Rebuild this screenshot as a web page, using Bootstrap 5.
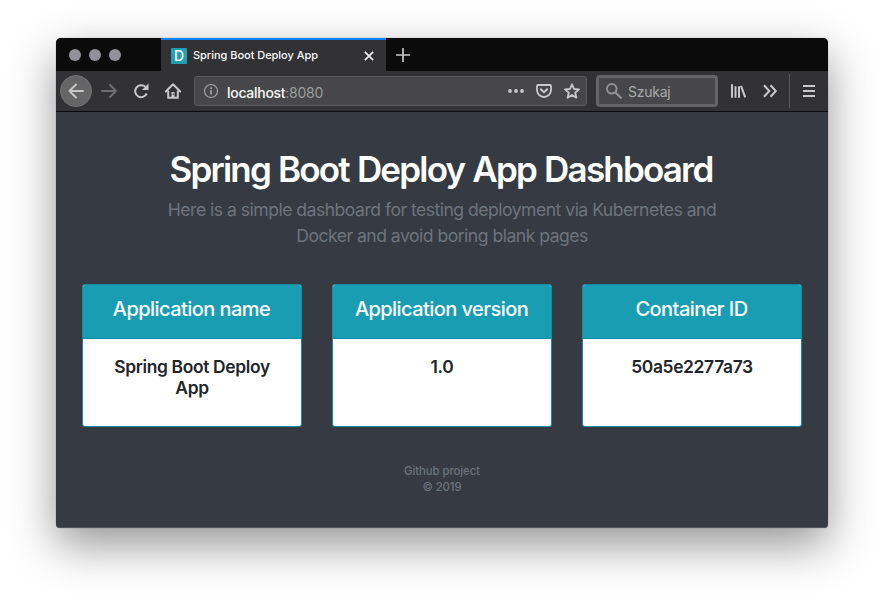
<!DOCTYPE html>
<html lang="en">
<head>
<meta charset="utf-8">
<meta name="viewport" content="width=device-width, initial-scale=1">
<title>Spring Boot Deploy App</title>
<link href="https://cdn.jsdelivr.net/npm/bootstrap@5.3.0/dist/css/bootstrap.min.css" rel="stylesheet">
<style>
body{font-family:Inter,"Liberation Sans",sans-serif;background:#fff;width:884px;height:602px;overflow:hidden;padding:38px 56px}
svg{display:block;flex:none;fill:none;stroke:#c9c9ca;stroke-width:2}
.window{width:772px;height:490px;border-radius:5px 5px 4px 4px;background:#363a43;overflow:hidden;box-shadow:0 0 1px rgba(0,0,0,.5),0 17px 46px rgba(0,0,0,.42);position:relative}
.window::after{content:"";position:absolute;inset:0;border-radius:inherit;box-shadow:inset 0 -1px 0 rgba(120,125,130,.4);pointer-events:none}
.tabs{height:33px;background:#0b0b0c}
.dots{width:105px;padding-left:13px;gap:8px}
.dots i{width:12px;height:12px;border-radius:50%;background:#919096}
.tab{width:225px;background:#323234;border-top:2px solid #0a84ff;color:#f9f9fa;font-size:11px;font-weight:500;padding:0 12px 0 10px}
.favicon{width:16px;height:16px;background:#239fb4;color:#fff;font-size:14px;line-height:16px;font-weight:500;border-radius:1px;margin-right:6px}
.tab-title{letter-spacing:-.03px}
.plus{margin-left:10px}
.toolbar{height:41px;background:#323234;border-bottom:1px solid #0b0b0c}
.back{width:32px;height:32px;border-radius:50%;background:#656566;border:1px solid #747475;margin-left:4px}
.back svg{margin:7px}
.reload{margin-left:15px}
.home{margin-left:16px}
.address{width:393px;height:30px;background:#474749;border:1px solid #5b5b5d;border-radius:3px;color:#f9f9fa;font-size:14px;font-weight:500;letter-spacing:-.28px;padding:0 6px 0 8px;margin-left:13px}
.address div{padding-top:2px}
.address span{color:#9d9d9f;font-weight:400}
.address svg+svg{margin-left:12px}
.info{stroke:#aaaaac;margin-right:8px}
.search{width:122px;height:32px;border:3px solid #656567;border-radius:4px;background:#474749;color:#aaaaac;font-size:14px;letter-spacing:-.25px;padding-left:7px;margin-left:9px}
.search svg{stroke:#929294;margin-right:6px}
.library{margin-left:12px}
.overflow-icon{margin-left:16px}
.divider{width:1px;height:34px;background:#59595b;margin-left:11px}
.menu-icon{margin-left:13px}
main{padding-top:36px}
h1.title{font-size:35px;line-height:42px;font-weight:600;color:#fff;letter-spacing:-1.8px;word-spacing:1px;padding-right:2px}
.intro{font-size:17.6px;line-height:26px;color:#6c757d;letter-spacing:-.52px;padding-top:7px}
.tiles{gap:30px;padding:0 26px;margin-top:35px}
.tile{width:220px;height:143px;border:1px solid #148da2;border-radius:3px;overflow:hidden}
.tile .card-header{height:54px;background:#199db3;border-bottom:1px solid #148da2;color:#fff;padding:12px 1px 0 0;border-radius:0}
.tile h2{font-size:20px;line-height:25px;font-weight:500;letter-spacing:-.56px}
.tile h3{font-size:17.4px;line-height:21px;font-weight:600;color:#212529;letter-spacing:-.33px}
.tile .card-body{padding:17px 20px}
footer{font-size:11.3px;line-height:16px;font-weight:500;color:#6c757d;letter-spacing:-.05px;margin-top:36px}
</style>
</head>
<body>
<div class="window">
  <div class="tabs d-flex">
    <div class="dots d-flex align-items-center"><i></i><i></i><i></i></div>
    <div class="tab d-flex align-items-center">
      <div class="favicon text-center">D</div>
      <span class="tab-title">Spring Boot Deploy App</span>
      <svg class="ms-auto" width="10" height="10" viewBox="0 0 10 10"><path d="M.8.8l8.4 8.4M9.200.8L.8 9.200" stroke="#eee" stroke-width="1.700"/></svg>
    </div>
    <svg class="plus align-self-center" width="14" height="14" viewBox="0 0 14 14"><path d="M7 0v14M0 7h14" stroke-width="1.700"/></svg>
  </div>
  <div class="toolbar d-flex align-items-center">
    <div class="back"><svg width="16" height="16" viewBox="0 0 16 16" stroke-linecap="round" stroke-linejoin="round"><path d="M15 8H1.500M8 1.500L1.500 8 8 14.500"/></svg></div>
    <svg class="ms-2" width="18" height="16" viewBox="0 0 18 16" stroke-linecap="round" stroke-linejoin="round"><path stroke="#6e6e70" d="M2 8h14M10 2l6 6-6 6"/></svg>
    <svg class="reload" width="16" height="16" viewBox="0 0 16 16"><path d="M13.700 10.500A6 6 0 1 1 12.300 3.800"/><path d="M15.500.5V7H9z" fill="#c9c9ca" stroke="none"/></svg>
    <svg class="home" width="16" height="16" viewBox="0 0 16 16"><path d="M.8 8.500L8 1.300l7.200 7.200" stroke-linecap="round" stroke-linejoin="round"/><path d="M3.200 7.500v7.300h9.600V7.500"/><path d="M6.500 9h3v6h-3z" fill="#c9c9ca" stroke="none"/><path d="M8.200 10.500v1.500" stroke="#323234" stroke-width="1"/></svg>
    <div class="address d-flex align-items-center">
      <svg class="info" width="16" height="16" viewBox="0 0 16 16"><circle cx="8" cy="8" r="6.500" stroke-width="1.100"/><path d="M8 7v4.500M8 4.300v1.600" stroke-width="1.600"/></svg>
      <div>localhost<span>:8080</span></div>
      <svg class="ms-auto" width="16" height="16" viewBox="0 0 16 16"><g fill="#c9c9ca" stroke="none"><circle cx="2" cy="8" r="1.900"/><circle cx="8" cy="8" r="1.900"/><circle cx="14" cy="8" r="1.900"/></g></svg>
      <svg width="16" height="16" viewBox="0 0 16 16"><path d="M2 2h12q1 0 1 1v4a7 7 0 0 1-14 0V3q0-1 1-1z" stroke-width="1.800"/><path d="M4.800 6.200L8 9.300l3.200-3.100" stroke-linecap="round" stroke-linejoin="round"/></svg>
      <svg width="16" height="16" viewBox="0 0 16 16"><path d="M8 1.300l2 4.700 5 .4-3.800 3.300 1.200 5L8 12l-4.400 2.700 1.200-5L1 6.400 6 6z" stroke-width="1.800" stroke-linejoin="round"/></svg>
    </div>
    <div class="search d-flex align-items-center">
      <svg width="16" height="16" viewBox="0 0 16 16"><circle cx="5.800" cy="5.800" r="4.800"/><path d="M9.500 9.500l6 6"/></svg>Szukaj
    </div>
    <svg class="library" width="16" height="16" viewBox="0 0 16 16"><path d="M2 1.200v13.600M5.500 3.200v11.600M9 3.200v11.600M11 2.800l4.200 11.500"/></svg>
    <svg class="overflow-icon" width="16" height="16" viewBox="0 0 16 16"><path d="M2 2.300L7.300 8 2 13.700M8.500 2.300L13.800 8l-5.300 5.700"/></svg>
    <div class="divider"></div>
    <svg class="menu-icon" width="12" height="16" viewBox="0 0 12 16"><path d="M0 3h12M0 8h12M0 13h12"/></svg>
  </div>
  <main class="text-center">
    <h1 class="title mb-0">Spring Boot Deploy App Dashboard</h1>
    <p class="intro mb-0">Here is a simple dashboard for testing deployment via Kubernetes and<br>Docker and avoid boring blank pages</p>
    <div class="tiles d-flex">
      <div class="tile card"><div class="card-header"><h2 class="mb-0">Application name</h2></div><div class="card-body"><h3 class="mb-0">Spring Boot Deploy App</h3></div></div>
      <div class="tile card"><div class="card-header"><h2 class="mb-0">Application version</h2></div><div class="card-body"><h3 class="mb-0">1.0</h3></div></div>
      <div class="tile card"><div class="card-header"><h2 class="mb-0">Container ID</h2></div><div class="card-body"><h3 class="mb-0">50a5e2277a73</h3></div></div>
    </div>
    <footer>Github project<br>© 2019</footer>
  </main>
</div>
<script src="https://cdn.jsdelivr.net/npm/bootstrap@5.3.0/dist/js/bootstrap.bundle.min.js"></script>
</body>
</html>
